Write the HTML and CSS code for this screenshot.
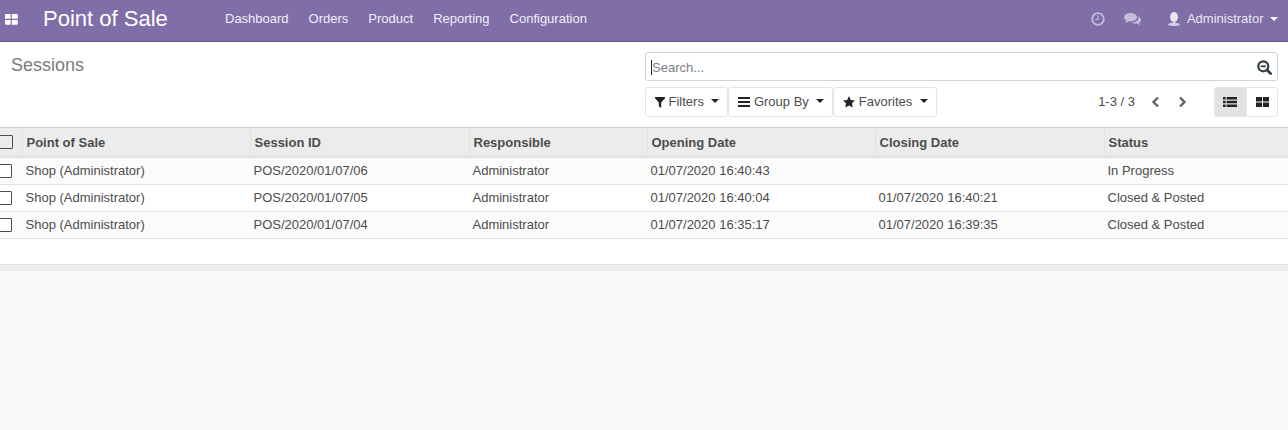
FILE: index.html
```html
<!DOCTYPE html>
<html lang="en">
<head>
<meta charset="utf-8">
<title>Sessions - Point of Sale</title>
<link rel="stylesheet" href="styles.css">
</head>
<body>
<header class="navbar">
  <svg class="apps" width="13" height="11" viewBox="0 0 13 11"><path fill="#fff" d="M0 1a1 1 0 0 1 1-1h4.600v4.800H0zM6.800 0h5a1 1 0 0 1 1 1v3.800h-6zM0 6h5.600v4.800H1a1 1 0 0 1-1-1zM6.800 6h6v3.800a1 1 0 0 1-1 1h-5z"/></svg>
  <span class="brand">Point of Sale</span>
  <nav class="menu">
    <a>Dashboard</a><a>Orders</a><a>Product</a><a>Reporting</a><a>Configuration</a>
  </nav>
  <div class="systray">
    <svg class="tray-clock" width="14" height="14" viewBox="0 0 14 14"><circle cx="7" cy="7" r="5.800" fill="none" stroke="#c5bcd9" stroke-width="1.800"/><path d="M7 3.500V7.500H4.500" fill="none" stroke="#c5bcd9" stroke-width="1.200"/></svg>
    <svg class="tray-chat" width="17" height="14" viewBox="0 0 17 14"><path fill="#c5bcd9" d="M6.500 1C10 1 13 2.900 13 5.200S10 9.400 6.500 9.400c-.7 0-1.300-.1-1.900-.2C3.700 10 2.500 10.500 1 10.700c.7-.7 1.200-1.500 1.400-2.400C.9 7.600 0 6.500 0 5.200 0 2.900 2.900 1 6.500 1z"/><path fill="#c5bcd9" d="M14 4.500c1.800.7 3 1.900 3 3.400 0 1.200-.7 2.200-1.900 2.900.1.800.5 1.500 1.100 2.200-1.200-.2-2.300-.7-3.100-1.400-.5.1-1 .1-1.500.1-1.500 0-2.900-.4-3.900-1.100 3.700-.1 6.700-2.200 6.700-4.900 0-.2-.2-.500-.4-.7z"/></svg>
    <svg class="tray-user" width="12" height="14" viewBox="0 0 12 14"><ellipse cx="6" cy="5" rx="4" ry="5" fill="#eae6f1"/><path fill="#d3cbe2" d="M4.600 9h2.800l.3 1.700c2 .3 4.300.8 4.300 1.800 0 .9-2.400 1.500-6 1.500s-6-.6-6-1.500c0-1 2.300-1.500 4.300-1.800z"/></svg>
    <span class="user-name">Administrator</span>
    <span class="caret caret-white"></span>
  </div>
</header>

<section class="control-panel">
  <h1 class="title">Sessions</h1>
  <div class="controls">
    <div class="search">
      <span class="cursor"></span>
      <span class="placeholder">Search...</span>
      <svg class="search-icon" width="15" height="15" viewBox="0 0 15 15"><circle cx="6.300" cy="6.300" r="5" fill="none" stroke="#2f3a40" stroke-width="2.200"/><path d="M3.800 6.300h5" stroke="#2f3a40" stroke-width="1.800"/><path d="M10 10l3.700 3.700" stroke="#2f3a40" stroke-width="2.600" stroke-linecap="round"/></svg>
    </div>
    <div class="toolbar">
      <div class="btn-group">
        <button class="btn"><svg width="10" height="11" viewBox="0 0 10 11"><path fill="#212529" d="M0 0h10v1.200L6.200 5.400V11L3.800 9.200V5.400L0 1.200z"/></svg>Filters<span class="caret"></span></button>
        <button class="btn"><svg width="12" height="10" viewBox="0 0 12 10"><path fill="#212529" d="M0 0h12v2H0zM0 4h12v2H0zM0 8h12v2H0z"/></svg>Group By<span class="caret"></span></button>
        <button class="btn"><svg width="12" height="12" viewBox="0 0 12 12"><path fill="#212529" d="M6 0l1.800 3.900 4.200.5-3.100 2.900.8 4.200L6 9.400l-3.700 2.100.8-4.200L0 4.400l4.200-.5z"/></svg>Favorites<span class="caret"></span></button>
      </div>
      <div class="pager">
        <span class="pager-value">1-3 / 3</span>
        <svg width="10" height="12" viewBox="0 0 10 12"><path d="M8 1.500L3.500 6 8 10.500" fill="none" stroke="#5f6468" stroke-width="2.400"/></svg>
        <svg class="pager-next" width="10" height="12" viewBox="0 0 10 12"><path d="M2 1.500L6.500 6 2 10.500" fill="none" stroke="#5f6468" stroke-width="2.400"/></svg>
      </div>
      <div class="view-switch">
        <button class="view view-active"><svg width="14" height="10" viewBox="0 0 14 10"><path fill="#212529" d="M0 0h2.600v2.400H0zM3.600 0H14v2.400H3.600zM0 3.800h2.600v2.400H0zM3.600 3.800H14v2.400H3.600zM0 7.600h2.600V10H0zM3.600 7.600H14V10H3.600z"/></svg></button>
        <button class="view"><svg width="13" height="10" viewBox="0 0 13 10"><path fill="#212529" d="M0 0h6v4.500H0zM7 0h6v4.500H7zM0 5.500h6V10H0zM7 5.500h6V10H7z"/></svg></button>
      </div>
    </div>
  </div>
</section>

<main class="content">
  <table class="list">
    <colgroup>
      <col class="c-check"><col class="c-pos"><col class="c-id"><col class="c-resp"><col class="c-open"><col class="c-close"><col class="c-status">
    </colgroup>
    <thead>
      <tr>
        <th class="check"><span class="box box-head"></span></th>
        <th>Point of Sale</th><th>Session ID</th><th>Responsible</th><th>Opening Date</th><th>Closing Date</th><th>Status</th>
      </tr>
    </thead>
    <tbody>
      <tr>
        <td class="check"><span class="box"></span></td>
        <td>Shop (Administrator)</td><td>POS/2020/01/07/06</td><td>Administrator</td><td>01/07/2020 16:40:43</td><td></td><td>In Progress</td>
      </tr>
      <tr>
        <td class="check"><span class="box"></span></td>
        <td>Shop (Administrator)</td><td>POS/2020/01/07/05</td><td>Administrator</td><td>01/07/2020 16:40:04</td><td>01/07/2020 16:40:21</td><td>Closed &amp; Posted</td>
      </tr>
      <tr>
        <td class="check"><span class="box"></span></td>
        <td>Shop (Administrator)</td><td>POS/2020/01/07/04</td><td>Administrator</td><td>01/07/2020 16:35:17</td><td>01/07/2020 16:39:35</td><td>Closed &amp; Posted</td>
      </tr>
    </tbody>
  </table>
  <div class="list-gap"></div>
  <div class="list-foot"></div>
</main>
</body>
</html>
```
FILE: styles.css
```css
* { box-sizing: border-box; }
html, body { height: 100%; }
body {
  margin: 0;
  overflow: hidden;
  display: flex;
  flex-direction: column;
  background: #f9f9f9;
  color: #4c4c4c;
  font: 13px/1.5 "Liberation Sans", Arial, sans-serif;
}
svg { display: block; flex: none; }

.navbar {
  height: 42px;
  flex: none;
  display: flex;
  align-items: center;
  background: #7f6ea8;
  border-bottom: 1px solid #5f5590;
  color: #fff;
}
.apps { margin: -3px 0 0 5px; }
.brand { margin: -3px 0 0 25px; width: 182px; font-size: 22px; line-height: 30px; color: #fff; }
.menu { display: flex; margin-top: -3px; }
.menu a { margin-right: 20px; color: #f1eef6; }
.systray { margin: -3px 10px 0 auto; display: flex; align-items: center; }
.tray-chat { margin-left: 19px; }
.tray-user { margin-left: 27px; }
.user-name { margin-left: 6.5px; color: #ebe7f2; }
.caret {
  display: inline-block;
  width: 0;
  height: 0;
  border-style: solid;
  border-width: 4px 4px 0;
  border-color: #212529 transparent transparent;
}
.caret-white { margin-left: 6.5px; border-top-color: #fff; }

.control-panel {
  height: 86px;
  flex: none;
  display: flex;
  background: #fff;
  border-bottom: 1px solid #cfcfcf;
}
.title {
  margin: 0;
  padding: 12px 0 0 11px;
  width: 645px;
  font-size: 18px;
  font-weight: 400;
  line-height: 22px;
  color: #7c7b78;
}
.controls { width: 633px; padding-top: 10px; }
.search {
  height: 29px;
  display: flex;
  align-items: center;
  padding: 2px 5px 0;
  border: 1px solid #ced4da;
  border-radius: 3px;
}
.cursor { width: 1px; height: 15px; background: #212529; }
.placeholder { color: #7b8288; }
.search-icon { margin-left: auto; }
.toolbar { display: flex; align-items: center; margin-top: 6px; }
.btn-group { display: flex; }
.btn {
  height: 30px;
  display: flex;
  align-items: center;
  padding: 0 8px 0 9px;
  background: #fff;
  border: 1px solid #e3e6e9;
  border-radius: 3px;
  font: inherit;
  color: #4c4c4c;
}
.btn svg { margin-right: 3.5px; }
.btn .caret { margin: -3px 0 0 7.5px; }
.pager { margin-left: auto; display: flex; align-items: center; color: #4c4c4c; }
.pager-value { margin-right: 15px; }
.pager-next { margin-left: 18px; }
.view-switch { margin-left: 26px; display: flex; }
.view {
  width: 32px;
  height: 30px;
  display: flex;
  align-items: center;
  justify-content: center;
  padding: 0;
  background: #fff;
  border: 1px solid #e3e6e9;
}
.view:first-child { border-radius: 3px 0 0 3px; }
.view:last-child { border-radius: 0 3px 3px 0; }
.view-active { background: #e2e2e2; }

.content { flex: 1; display: flex; flex-direction: column; }
.list {
  width: 1288px;
  table-layout: fixed;
  border-collapse: separate;
  border-spacing: 0;
  background: #fff;
}
.c-check { width: 22px; }
.c-pos { width: 228px; }
.c-id { width: 219px; }
.c-resp { width: 178px; }
.c-open { width: 228px; }
.c-close { width: 229px; }
.c-status { width: 184px; }
.list th {
  height: 30px;
  padding: 2px 3px 0 3.5px;
  text-align: left;
  font-weight: 700;
  background: #ececec;
  border-left: 1px solid #e2e2e2;
  border-bottom: 3px solid #e2e2e2;
  color: #4c4c4c;
}
.list th:first-child { border-left: 0; }
.list td {
  height: 27px;
  padding: 0 3px 0 3.5px;
  background: #fff;
  border-bottom: 1px solid #dee2e6;
}
.list tbody tr:nth-child(odd) td { background: #fbfbfb; }
.box {
  display: block;
  width: 14px;
  height: 14px;
  margin-left: -5.5px;
  background: #fff;
  border: 1px solid #4c4c4c;
  border-radius: 1px;
}
.box-head { margin-left: -4.5px; margin-top: -2px; background: #ececec; }
.list-gap { height: 25px; background: #fff; }
.list-foot { height: 7px; background: #ececec; border-top: 1px solid #dee2e6; }
```
